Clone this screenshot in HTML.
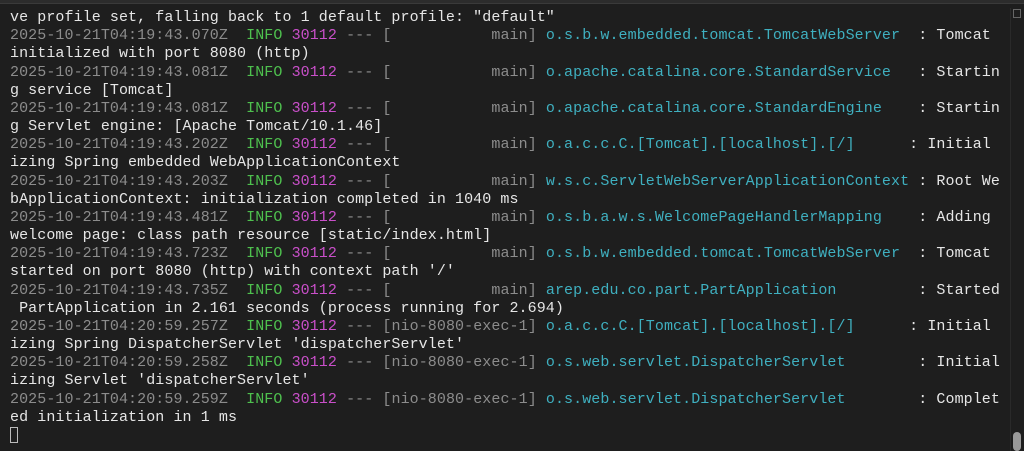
<!DOCTYPE html>
<html><head><meta charset="utf-8"><style>
html,body{margin:0;padding:0;background:#1e1e1e;width:1024px;height:451px;overflow:hidden}
.top{position:absolute;left:0;top:0;width:1024px;height:3px;background:#2c2c2c;border-bottom:1px solid #3a3a3a}
pre{position:absolute;left:10px;top:9px;margin:0;font-family:"Liberation Mono",monospace;font-size:15px;letter-spacing:0.08px;line-height:18.17px;color:#e6e6e6;white-space:pre}
.g{color:#8c8c8c}.n{color:#4ec04e}.p{color:#c94fc9}.c{color:#3fb0c0}
.cur{display:inline-block;width:8px;height:16px;border:1.5px solid #bbb;box-sizing:border-box;vertical-align:-3px}
.sb{position:absolute;left:1013px;top:432px;width:8px;height:19px;background:#9a9a9a;border-radius:4px}
.tr{position:absolute;left:1010px;top:8px;width:1px;height:443px;background:#2a2a2a}
.ic{position:absolute;left:1013px;top:9px;width:8px;height:9px;border:1px solid #666;box-sizing:border-box}
</style></head><body>
<div class="top"></div><div class="tr"></div><div class="ic"></div><div class="sb"></div>
<pre>ve profile set, falling back to 1 default profile: "default"
<span class="g">2025-10-21T04:19:43.070Z</span>  <span class="n">INFO</span> <span class="p">30112</span> <span class="g">--- [           main]</span> <span class="c">o.s.b.w.embedded.tomcat.TomcatWebServer </span> : Tomcat
initialized with port 8080 (http)
<span class="g">2025-10-21T04:19:43.081Z</span>  <span class="n">INFO</span> <span class="p">30112</span> <span class="g">--- [           main]</span> <span class="c">o.apache.catalina.core.StandardService  </span> : Startin
g service [Tomcat]
<span class="g">2025-10-21T04:19:43.081Z</span>  <span class="n">INFO</span> <span class="p">30112</span> <span class="g">--- [           main]</span> <span class="c">o.apache.catalina.core.StandardEngine   </span> : Startin
g Servlet engine: [Apache Tomcat/10.1.46]
<span class="g">2025-10-21T04:19:43.202Z</span>  <span class="n">INFO</span> <span class="p">30112</span> <span class="g">--- [           main]</span> <span class="c">o.a.c.c.C.[Tomcat].[localhost].[/]     </span> : Initial
izing Spring embedded WebApplicationContext
<span class="g">2025-10-21T04:19:43.203Z</span>  <span class="n">INFO</span> <span class="p">30112</span> <span class="g">--- [           main]</span> <span class="c">w.s.c.ServletWebServerApplicationContext</span> : Root We
bApplicationContext: initialization completed in 1040 ms
<span class="g">2025-10-21T04:19:43.481Z</span>  <span class="n">INFO</span> <span class="p">30112</span> <span class="g">--- [           main]</span> <span class="c">o.s.b.a.w.s.WelcomePageHandlerMapping   </span> : Adding
welcome page: class path resource [static/index.html]
<span class="g">2025-10-21T04:19:43.723Z</span>  <span class="n">INFO</span> <span class="p">30112</span> <span class="g">--- [           main]</span> <span class="c">o.s.b.w.embedded.tomcat.TomcatWebServer </span> : Tomcat
started on port 8080 (http) with context path '/'
<span class="g">2025-10-21T04:19:43.735Z</span>  <span class="n">INFO</span> <span class="p">30112</span> <span class="g">--- [           main]</span> <span class="c">arep.edu.co.part.PartApplication        </span> : Started
 PartApplication in 2.161 seconds (process running for 2.694)
<span class="g">2025-10-21T04:20:59.257Z</span>  <span class="n">INFO</span> <span class="p">30112</span> <span class="g">--- [nio-8080-exec-1]</span> <span class="c">o.a.c.c.C.[Tomcat].[localhost].[/]     </span> : Initial
izing Spring DispatcherServlet 'dispatcherServlet'
<span class="g">2025-10-21T04:20:59.258Z</span>  <span class="n">INFO</span> <span class="p">30112</span> <span class="g">--- [nio-8080-exec-1]</span> <span class="c">o.s.web.servlet.DispatcherServlet       </span> : Initial
izing Servlet 'dispatcherServlet'
<span class="g">2025-10-21T04:20:59.259Z</span>  <span class="n">INFO</span> <span class="p">30112</span> <span class="g">--- [nio-8080-exec-1]</span> <span class="c">o.s.web.servlet.DispatcherServlet       </span> : Complet
ed initialization in 1 ms
<span class="cur"></span></pre>
</body></html>
